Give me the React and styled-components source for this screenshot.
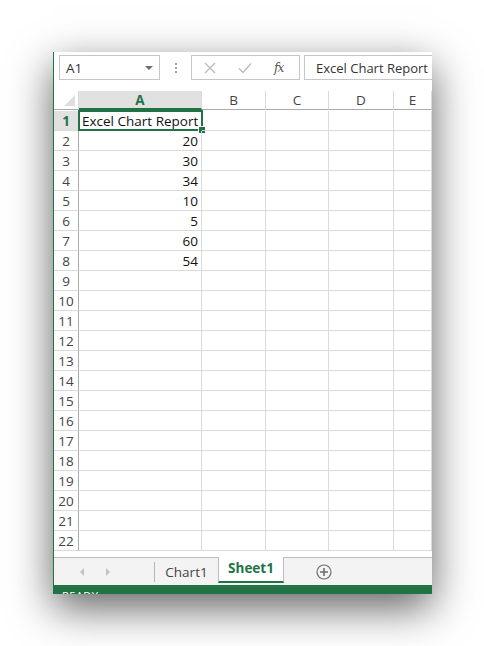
import React from 'react';
import styled, { createGlobalStyle } from 'styled-components';

const GlobalStyle = createGlobalStyle`
    html, body {
        margin: 0;
        padding: 0;
        background: #ffffff;
    }
    body {
        width: 484px;
        height: 646px;
        overflow: hidden;
        font-family: "Open Sans", "Noto Sans", sans-serif;
    }
`;

const green = '#217346';
const gridLine = '#dadada';

const Page = styled.div`
    padding: 52px 0 0 53px;
`;

const Window = styled.div`
    width: 379px;
    height: 542px;
    background: #ffffff;
    border-left: 1px solid ${green};
    box-sizing: border-box;
    display: flex;
    flex-direction: column;
    overflow: hidden;
    box-shadow: 0 14px 40px rgba(0, 0, 0, 0.62);
`;

// 公式列
const FormulaBar = styled.div`
    height: 39px;
    display: flex;
    align-items: flex-start;
    padding: 3px 0 0 5px;
    box-sizing: border-box;
    flex-shrink: 0;
`;

const NameBox = styled.div`
    width: 101px;
    height: 25px;
    border: 1px solid #c6c6c6;
    box-sizing: border-box;
    display: flex;
    align-items: center;
    justify-content: space-between;
    padding: 0 6px 0 6px;
    font-size: 13.5px;
    color: #333;
`;

const DropArrow = styled.span`
    width: 0;
    height: 0;
    border-left: 4px solid transparent;
    border-right: 4px solid transparent;
    border-top: 4px solid #6e6e6e;
`;

const Dots = styled.div`
    width: 31px;
    height: 25px;
    display: flex;
    flex-direction: column;
    align-items: center;
    justify-content: center;
    gap: 2px;

    span {
        width: 2px;
        height: 2px;
        background: #a0a0a0;
    }
`;

const IconBox = styled.div`
    width: 109px;
    height: 25px;
    border: 1px solid #c6c6c6;
    box-sizing: border-box;
    display: flex;
    align-items: center;
    padding-left: 12px;
    gap: 22px;
`;

const Fx = styled.span`
    font-family: "DejaVu Serif", "Liberation Serif", serif;
    font-style: italic;
    font-size: 12px;
    color: #555;
    letter-spacing: -1px;
`;

const FormulaInput = styled.div`
    flex: 1;
    height: 25px;
    margin-left: 4px;
    border: 1px solid #c6c6c6;
    border-right: none;
    box-sizing: border-box;
    display: flex;
    align-items: center;
    padding-left: 11px;
    font-size: 13px;
    color: #333;
    white-space: nowrap;
    overflow: hidden;
`;

// 工作表格線
const Sheet = styled.div`
    flex: 1;
    display: grid;
    grid-template-columns: 25px 123px 64px 63px 65px 1fr;
    grid-auto-rows: 20px;
    align-content: start;
    overflow: hidden;
`;

const Corner = styled.div`
    background: #ffffff;
    border-right: 1px solid ${gridLine};
    border-bottom: 1px solid #ababab;
    box-sizing: border-box;
    height: 19px;
    position: relative;

    &::after {
        content: '';
        position: absolute;
        right: 3px;
        bottom: 3px;
        width: 0;
        height: 0;
        border-left: 11px solid transparent;
        border-bottom: 11px solid #dfdfdf;
    }
`;

const ColHead = styled.div`
    height: 19px;
    box-sizing: border-box;
    display: flex;
    align-items: center;
    justify-content: center;
    font-size: 13.5px;
    color: ${({ $active }) => ($active ? green : '#444')};
    font-weight: ${({ $active }) => ($active ? 700 : 400)};
    background: ${({ $active }) => ($active ? '#e1e1e1' : '#ffffff')};
    border-right: 1px solid ${gridLine};
    border-bottom: ${({ $active }) => ($active ? `2px solid ${green}` : '1px solid #ababab')};
`;

const RowHead = styled.div`
    box-sizing: border-box;
    display: flex;
    align-items: center;
    justify-content: center;
    font-size: 13.5px;
    color: ${({ $active }) => ($active ? green : '#444')};
    font-weight: ${({ $active }) => ($active ? 700 : 400)};
    background: ${({ $active }) => ($active ? '#e1e1e1' : '#ffffff')};
    border-right: 1px solid #ababab;
    border-bottom: 1px solid ${gridLine};
`;

const Cell = styled.div`
    box-sizing: border-box;
    border-right: 1px solid ${gridLine};
    border-bottom: 1px solid ${gridLine};
    display: flex;
    align-items: center;
    justify-content: ${({ $num }) => ($num ? 'flex-end' : 'flex-start')};
    padding: 0 3px 0 3px;
    font-size: 13.5px;
    color: #111;
    white-space: nowrap;
    position: relative;
`;

const Selection = styled.div`
    position: absolute;
    left: -1px;
    top: -1px;
    right: -2px;
    bottom: -1px;
    border: 2px solid ${green};
    pointer-events: none;

    &::after {
        content: '';
        position: absolute;
        right: -5px;
        bottom: -5px;
        width: 6px;
        height: 6px;
        background: ${green};
        border: 1px solid #fff;
    }
`;

// 工作表分頁
const TabBar = styled.div`
    height: 28px;
    flex-shrink: 0;
    display: flex;
    align-items: stretch;
    background: #f3f3f3;
    border-top: 1px solid #bdbdbd;
    box-sizing: border-box;
`;

const NavArrows = styled.div`
    width: 100px;
    display: flex;
    align-items: center;
    padding-left: 26px;
    box-sizing: border-box;
    gap: 22px;
`;

const Arrow = styled.span`
    width: 0;
    height: 0;
    border-top: 4px solid transparent;
    border-bottom: 4px solid transparent;
    ${({ $dir }) => ($dir === 'left' ? 'border-right: 4px solid #c3c3c3;' : 'border-left: 4px solid #c3c3c3;')}
`;

const Divider = styled.span`
    width: 1px;
    height: 20px;
    background: #b5b5b5;
    align-self: center;
`;

const Tab = styled.div`
    display: flex;
    align-items: center;
    justify-content: center;
    font-size: 13.5px;
    box-sizing: border-box;
    padding: ${({ $active }) => ($active ? '0 0 3px 0' : '0')};
    margin-top: ${({ $active }) => ($active ? '-1px' : '0')};
    color: ${({ $active }) => ($active ? green : '#444')};
    font-weight: ${({ $active }) => ($active ? 700 : 400)};
    background: ${({ $active }) => ($active ? '#ffffff' : 'transparent')};
    border-left: ${({ $active }) => ($active ? '1px solid #bdbdbd' : 'none')};
    border-right: ${({ $active }) => ($active ? '1px solid #bdbdbd' : 'none')};
    border-bottom: ${({ $active }) => ($active ? `2px solid ${green}` : 'none')};
    height: ${({ $active }) => ($active ? '26px' : 'auto')};
    width: ${({ $w }) => $w}px;
`;

const AddSheet = styled.div`
    display: flex;
    align-items: center;
    padding-left: 32px;
`;

const StatusBar = styled.div`
    height: 9px;
    flex-shrink: 0;
    background: ${green};
    color: #ffffff;
    font-size: 11px;
    line-height: 11px;
    padding: 5px 0 0 8px;
    box-sizing: border-box;
    overflow: hidden;
    letter-spacing: 0.5px;
`;

const columns = ['A', 'B', 'C', 'D', 'E'];
const values = ['Excel Chart Report', 20, 30, 34, 10, 5, 60, 54];
const rowCount = 22;

const CancelIcon = () => (
    <svg width="12" height="12" viewBox="0 0 12 12">
        <path d="M1 1 L11 11 M11 1 L1 11" stroke="#bcbcbc" strokeWidth="1.4" fill="none" />
    </svg>
);

const EnterIcon = () => (
    <svg width="14" height="12" viewBox="0 0 14 12">
        <path d="M1 6.5 L5 10.5 L13 1.5" stroke="#bcbcbc" strokeWidth="1.5" fill="none" />
    </svg>
);

const PlusCircle = () => (
    <svg width="16" height="16" viewBox="0 0 16 16">
        <circle cx="8" cy="8" r="7" stroke="#6f6f6f" strokeWidth="1.2" fill="none" />
        <path d="M8 4 V12 M4 8 H12" stroke="#6f6f6f" strokeWidth="1.6" />
    </svg>
);

const App = () => {

    const rows = Array.from({ length: rowCount }, (_, i) => i + 1);

    return (
        <>
            <GlobalStyle />
            <Page>
                <Window>
                    <FormulaBar>
                        <NameBox>
                            A1
                            <DropArrow />
                        </NameBox>
                        <Dots>
                            <span />
                            <span />
                            <span />
                        </Dots>
                        <IconBox>
                            <CancelIcon />
                            <EnterIcon />
                            <Fx>fx</Fx>
                        </IconBox>
                        <FormulaInput>Excel Chart Report</FormulaInput>
                    </FormulaBar>

                    <Sheet>
                        <Corner />
                        {columns.map((c) => (
                            <ColHead key={c} $active={c === 'A'}>{c}</ColHead>
                        ))}
                        {rows.map((r) => {
                            const v = values[r - 1];
                            return (
                                <React.Fragment key={r}>
                                    <RowHead $active={r === 1}>{r}</RowHead>
                                    <Cell $num={typeof v === 'number'}>
                                        {v}
                                        {r === 1 && <Selection />}
                                    </Cell>
                                    {columns.slice(1).map((c) => (
                                        <Cell key={c} />
                                    ))}
                                </React.Fragment>
                            );
                        })}
                    </Sheet>

                    <TabBar>
                        <NavArrows>
                            <Arrow $dir="left" />
                            <Arrow $dir="right" />
                        </NavArrows>
                        <Divider />
                        <Tab $w={63}>Chart1</Tab>
                        <Tab $active $w={66}>Sheet1</Tab>
                        <AddSheet>
                            <PlusCircle />
                        </AddSheet>
                    </TabBar>

                    <StatusBar>READY</StatusBar>
                </Window>
            </Page>
        </>
    );

};

export default App;
